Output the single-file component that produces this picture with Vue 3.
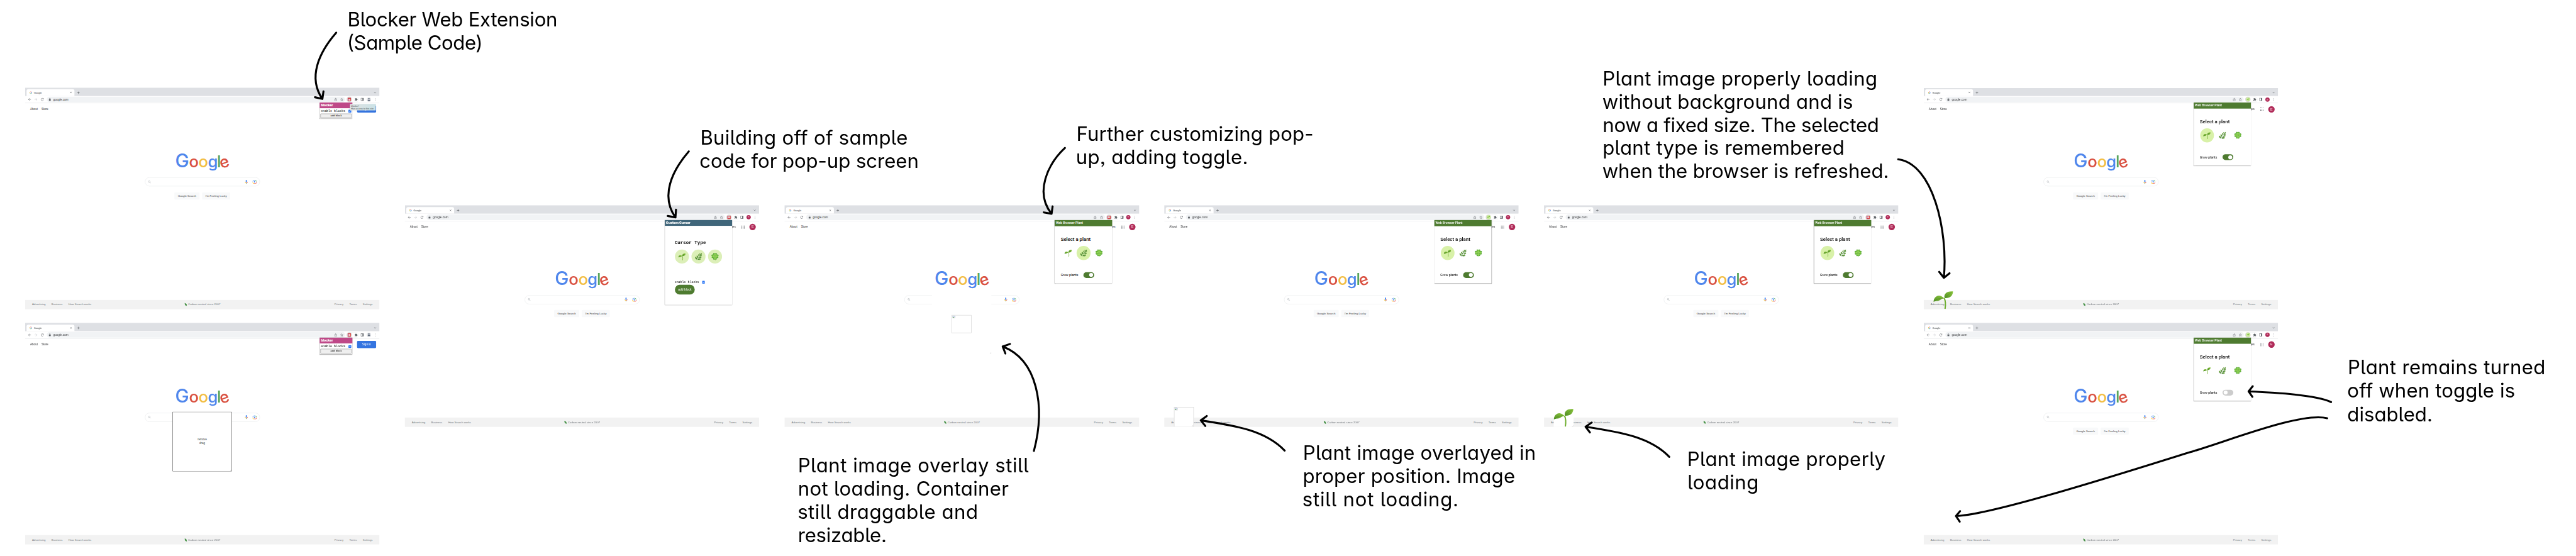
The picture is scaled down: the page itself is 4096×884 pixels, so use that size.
<script setup>
const windows = [
  { id: 'w1', x: 70, y: 243.5, ext: 'b', popup: 'blocker', guest: true, tip: true, buttons: true },
  { id: 'w2', x: 70, y: 898, ext: 'b', popup: 'blocker', guest: true, overlay: 'block' },
  { id: 'w3', x: 1126, y: 571, ext: 'b', popup: 'cursor', buttons: true },
  { id: 'w4', x: 2182.3, y: 571, ext: 'b', popup: 'plant', selected: 'herb', on: true, overlay: 'center' },
  { id: 'w5', x: 3238, y: 571, ext: 'plant', popup: 'plant', selected: 'sprout', on: true, buttons: true, overlay: 'corner' },
  { id: 'w6', x: 4294, y: 571, ext: 'b', popup: 'plant', selected: 'sprout', on: true, buttons: true, overlay: 'corner-plant' },
  { id: 'w7', x: 5350, y: 243.5, ext: 'plant', popup: 'plant', selected: 'sprout', on: true, buttons: true, overlay: 'plant' },
  { id: 'w8', x: 5350, y: 898, ext: 'plant', popup: 'plant', selected: '', on: false, buttons: true },
]
const plants = ['sprout', 'herb', 'clover']

// [text, left, right, baseline]
const notes = [
  ['Blocker Web Extension', 970.5, 1547.5, 73],
  ['(Sample Code)', 969, 1339.6, 138],
  ['Building off of sample', 1951.4, 2521.6, 403],
  ['code for pop-up screen', 1949.5, 2552, 467.5],
  ['Further customizing pop-', 2997.5, 3650, 392],
  ['up, adding toggle.', 2996, 3468, 456.5],
  ['Plant image overlay still', 2223, 2858, 1314],
  ['not loading. Container', 2223, 2802.4, 1378.5],
  ['still draggable and', 2222, 2717, 1443],
  ['resizable.', 2223, 2463, 1508],
  ['Plant image overlayed in', 3627.6, 4268.6, 1278],
  ['proper position. Image', 3627, 4210.6, 1343],
  ['still not loading.', 3626, 4053, 1408],
  ['Plant image properly', 4696, 5240.8, 1296],
  ['loading', 4697, 4888, 1360.6],
  ['Plant image properly loading', 4461, 5218, 237.3],
  ['without background and is', 4460, 5150.6, 302],
  ['now a fixed size. The selected', 4461, 5223, 366.6],
  ['plant type is remembered', 4461, 5126.4, 431],
  ['when the browser is refreshed.', 4460, 5250, 495.7],
  ['Plant remains turned', 6533, 7076, 1041],
  ['off when toggle is', 6532, 6991.6, 1106],
  ['disabled.', 6532, 6762, 1171],
]

const arrows = [
  'M935 91C888 145 855 215 896.6 275M876 270.5L896.6 275L899.6 254',
  'M1915.5 421C1869 475 1836 545 1878.5 604.5M1857 600.5L1878.5 604.5L1880 583',
  'M2961.7 411.4C2915 455 2876 535 2924.5 594.4M2903 590.6L2924.5 594.4L2927.3 574',
  'M2875.4 1254C2908 1130 2885 1000 2788.5 963.6M2808.7 956.5L2788.5 963.6L2796 983',
  'M3572.6 1253C3520 1198 3440 1184 3339.5 1169M3356 1157L3339.5 1169L3352 1184.5',
  'M4642.4 1270.5C4590 1216 4510 1202 4409.5 1186.8M4426.7 1175L4409.5 1186.8L4421.6 1202.5',
  'M5279 443C5375 455 5418 640 5406 772.5M5393 756L5406 772.5L5421.7 760',
  'M6482.8 1118C6440 1098 6330 1092 6253.5 1088.4M6265 1074L6253.5 1088.4L6264 1103.5',
  'M6472 1163C6400 1145 6200 1225 6102 1254S5550 1432 5439.5 1435M5451 1421.5L5439.5 1435L5450 1450.5',
]
</script>

<template>
  <div class="viewport">
    <svg class="defs" aria-hidden="true">
      <defs>
        <linearGradient id="leafA" x1="0" y1="1" x2="1" y2="0">
          <stop offset="0" stop-color="#4f8d24" /><stop offset="1" stop-color="#8fc93f" />
        </linearGradient>
        <linearGradient id="leafB" x1="0" y1="0" x2="0" y2="1">
          <stop offset="0" stop-color="#7fb04c" /><stop offset="1" stop-color="#3f7d31" />
        </linearGradient>
        <radialGradient id="leafC">
          <stop offset="0" stop-color="#a4dd5a" /><stop offset="1" stop-color="#4da52c" />
        </radialGradient>
        <symbol id="sprout" viewBox="0 0 55 55">
          <path d="M30 24C34 32 34 43 32.3 54" fill="none" stroke="#6fae2f" stroke-width="3.6" />
          <path d="M0 35C1 22 11 14 21 18.500C26 20.500 28 23 31.500 26C25 24 22 28 16 30.500C9 33 4 31 0 35Z" fill="url(#leafA)" />
          <path d="M31 24C28 13 36 4 54.500 5.300C54 18 45 25 31 24Z" fill="url(#leafA)" />
          <path d="M2 33C10 26 18 24 27 24M33 22C39 16 45 11 52 7" stroke="#4a8522" stroke-width=".8" fill="none" />
        </symbol>
        <symbol id="herb" viewBox="0 0 55 55">
          <path d="M17 54C17 44 24 38 30 31S42 16 45 7" fill="none" stroke="#6fa046" stroke-width="2" />
          <g fill="url(#leafB)">
            <ellipse cx="10" cy="39" rx="5.500" ry="11" transform="rotate(-38 10 39)" />
            <ellipse cx="20" cy="28" rx="5" ry="9.500" transform="rotate(-34 20 28)" />
            <ellipse cx="30" cy="18" rx="4.300" ry="8" transform="rotate(-28 30 18)" />
            <ellipse cx="38" cy="10" rx="3.300" ry="7" transform="rotate(-14 38 10)" />
            <ellipse cx="48" cy="9" rx="3.300" ry="7.500" transform="rotate(24 48 9)" />
            <ellipse cx="46" cy="20" rx="4" ry="8" transform="rotate(62 46 20)" />
            <ellipse cx="42" cy="32" rx="4.800" ry="9.500" transform="rotate(72 42 32)" />
            <ellipse cx="34" cy="46" rx="6" ry="12" transform="rotate(84 34 46)" />
          </g>
        </symbol>
        <symbol id="clover" viewBox="0 0 55 55">
          <path d="M27 27C27 38 28 46 30 55" fill="none" stroke="#6eb33a" stroke-width="3" />
          <g fill="url(#leafC)">
            <path d="M27 26C20 22 14 14 14 8C15 1 24 -1 27.500 6C31 -1 40 1 41 8C41 14 34 22 27 26Z" />
            <path d="M28 26C32 18 40 12 46 12C54 13 56 22 49 26.500C55 31 52 39 45 39C38 39 31 32 28 26Z" />
            <path d="M27 26C23 18 15 12 9 12C1 13 -1 22 6 26.500C0 31 3 39 10 39C17 39 24 32 27 26Z" />
            <path d="M27 27C20 31 13 38 14 45C16 52 25 53 27.500 46C30 52 39 51 41 45C41 38 35 31 27 27Z" />
          </g>
          <path d="M27 26L22 12M28 26L33 12M27 26L12 21M28 26L43 21M27 26L20 41M28 26L35 41" stroke="#c5ea8c" stroke-width="1.200" />
        </symbol>
        <symbol id="gmark" viewBox="0 0 48 48">
          <g fill="none" stroke-width="8.500">
            <path d="M38 13A18 18 0 0 0 8.400 15" stroke="#ea4335" />
            <path d="M8.400 15A18 18 0 0 0 8.400 33" stroke="#fbbc05" />
            <path d="M8.400 33A18 18 0 0 0 35 38" stroke="#34a853" />
            <path d="M35 38A18 18 0 0 0 42 24H24" stroke="#4285f4" />
          </g>
        </symbol>
        <symbol id="puzzle" viewBox="0 0 24 24">
          <path fill="#5f6368" d="M20.500 11H19V7a2 2 0 0 0-2-2h-4V3.500a2.500 2.500 0 0 0-5 0V5H4a2 2 0 0 0-2 2v3.800h1.500a2.700 2.700 0 0 1 0 5.400H2V20a2 2 0 0 0 2 2h3.800v-1.500a2.700 2.700 0 0 1 5.400 0V22H17a2 2 0 0 0 2-2v-4h1.500a2.500 2.500 0 0 0 0-5z" />
        </symbol>
        <symbol id="broken" viewBox="0 0 16 16">
          <path d="M1 1H11L15 5V7L9 13H1Z" fill="#cfdcec" stroke="#a9b1b8" />
          <path d="M2 11Q5 5 9 10L7 12H2Z" fill="#6aa84f" />
          <path d="M15 8V15H8Z" fill="#d5d5d5" />
        </symbol>
      </defs>
    </svg>

    <div class="board">
      <section v-for="w in windows" :key="w.id" class="window" :style="{ left: w.x + 'px', top: w.y + 'px' }">
        <header class="tabs">
          <div class="tab">
            <svg class="g"><use href="#gmark" /></svg>
            <span>Google</span>
            <svg class="x" viewBox="0 0 6 6"><path d="M1 1L5 5M5 1L1 5" /></svg>
          </div>
          <svg class="plus" viewBox="0 0 8 8"><path d="M4 .5V7.500M.5 4H7.500" /></svg>
          <svg class="chev" viewBox="0 0 8 6"><path d="M1.500 1.500L4 4L6.500 1.500" /></svg>
        </header>

        <div class="toolbar">
          <svg class="nav" viewBox="0 0 9 9"><path d="M8.200 4.500H1.200M4.500 1L1 4.500L4.500 8" /></svg>
          <svg class="nav pale" viewBox="0 0 9 9"><path d="M.8 4.500H7.800M4.500 1L8 4.500L4.500 8" /></svg>
          <svg class="nav" viewBox="0 0 9 9"><path d="M7.600 6A3.400 3.400 0 1 1 6.900 2.100L7.800 3.200M8 .8V3.400H5.400" /></svg>
          <div class="address">
            <svg class="lock" viewBox="0 0 8 10"><rect x="1" y="4" width="6" height="5.500" rx=".8" fill="#5f6368" /><path d="M2.300 4.500V2.700a1.700 1.700 0 0 1 3.400 0V4.500" fill="none" stroke="#5f6368" /></svg>
            <span>google.com</span>
            <svg class="act share" viewBox="0 0 9 10"><path d="M3 3.500H1.500V9H7.500V3.500H6M4.500 6.500V1M2.800 2.600L4.500 1L6.200 2.600" /></svg>
            <svg class="act" viewBox="0 0 10 10"><path d="M5 1L6.200 3.700L9.100 4L6.900 5.900L7.600 8.800L5 7.300L2.400 8.800L3.100 5.900L.9 4L3.800 3.700Z" /></svg>
          </div>
          <div class="extensions">
            <span class="halo">
              <b v-if="w.ext === 'b'" class="bee">B</b>
              <span v-else class="mini"><svg><use href="#sprout" /></svg></span>
            </span>
            <svg class="puzzle"><use href="#puzzle" /></svg>
          </div>
          <svg class="side" viewBox="0 0 9 9"><rect x=".8" y=".8" width="7" height="7" fill="none" stroke="#5f6368" stroke-width="1.200" /><rect x="5" y=".8" width="3" height="7" fill="#5f6368" /></svg>
          <span v-if="w.guest" class="who guest"><svg viewBox="0 0 12 12"><circle cx="6" cy="4" r="2" /><path d="M2.300 9.300C2.300 6.300 9.700 6.300 9.700 9.300Z" /></svg></span>
          <span v-else class="who">E</span>
          <svg class="dots" viewBox="0 0 3 9"><circle cx="1.500" cy="1.500" r=".8" /><circle cx="1.500" cy="4.500" r=".8" /><circle cx="1.500" cy="7.500" r=".8" /></svg>
        </div>

        <nav class="links">
          <span>About</span><span>Store</span>
          <div class="right">
            <span v-if="w.guest" class="signin">Sign in</span>
            <template v-else>
              <span class="images">Images</span>
              <svg class="apps" viewBox="0 0 9 9"><g fill="#5f6368"><template v-for="r in 3" :key="r"><rect v-for="c in 3" :key="c" :x="c * 3.5 - 3.4" :y="r * 3.5 - 3.4" width="1.900" height="1.900" rx=".5" /></template></g></svg>
              <span class="me">E</span>
            </template>
          </div>
        </nav>

        <main class="page">
          <div class="logo"><span class="bl cap">G</span><span class="re">o</span><span class="ye">o</span><span class="bl">g</span><span class="gr ell">l</span><span class="re tilt">e</span></div>
          <div class="search">
            <svg class="mag" viewBox="0 0 8 8"><circle cx="3" cy="3" r="2.200" /><path d="M4.700 4.700L7.400 7.400" /></svg>
            <svg class="mic" viewBox="0 0 10 12"><rect x="3.400" y=".3" width="3.200" height="6.800" rx="1.600" fill="#4285f4" /><path d="M1.700 5.500A3.300 3.300 0 0 0 5 9" stroke="#fbbc05" /><path d="M5 9A3.300 3.300 0 0 0 8.300 5.500" stroke="#ea4335" /><path d="M5 8.700V11.200" stroke="#34a853" /></svg>
            <svg class="lens" viewBox="0 0 12 11"><path d="M1 5V4A2 2 0 0 1 3 2.200H3.600L4.400 1H7.600" stroke="#4285f4" /><path d="M7.600 1L8.400 2.200A2.300 2.300 0 0 1 11 4.500V5" stroke="#34a853" /><path d="M1 6V8A2 2 0 0 0 3 10H5" stroke="#fbbc05" /><path d="M5 10H9A2 2 0 0 0 11 8V6" stroke="#ea4335" /><circle cx="6" cy="5.800" r="1.900" fill="#4285f4" /></svg>
          </div>
          <div v-if="w.buttons" class="buttons"><span>Google Search</span><span>I'm Feeling Lucky</span></div>
        </main>

        <footer class="foot">
          <span>Advertising</span><span>Business</span><span>How Search works</span>
          <div class="carbon"><svg viewBox="0 0 8 10"><path d="M.5.500C4 1 8 4 7.500 9.500C4 9 0 7 .5.500Z" fill="#3c8d40" /><path d="M.5.500C3 3 5 6 7.500 9.500" stroke="#9bd18b" stroke-width=".7" /></svg>Carbon neutral since 2007</div>
          <div class="legal"><span>Privacy</span><span>Terms</span><span>Settings</span></div>
        </footer>

        <div v-if="w.overlay === 'block'" class="block"><span>remove</span><span>drag</span>
          <svg class="grip" viewBox="0 0 6 6"><path d="M1 6L6 1M4 6L6 4" /></svg>
        </div>
        <div v-if="w.overlay === 'center'" class="blank">
          <div class="missing"><svg><use href="#broken" /></svg></div>
          <svg class="grip" viewBox="0 0 6 6"><path d="M1 6L6 1M4 6L6 4" /></svg>
        </div>
        <div v-if="w.overlay === 'corner'" class="corner missing"><svg><use href="#broken" /></svg>
          <svg class="grip" viewBox="0 0 6 6"><path d="M1 6L6 1M4 6L6 4" /></svg>
        </div>
        <div v-if="w.overlay === 'corner-plant'" class="corner">
          <svg class="fill"><use href="#sprout" /></svg>
          <svg class="grip" viewBox="0 0 6 6"><path d="M1 6L6 1M4 6L6 4" /></svg>
        </div>
        <div v-if="w.overlay === 'plant'" class="corner clear"><svg class="fill"><use href="#sprout" /></svg></div>

        <aside v-if="w.popup === 'blocker'" class="popup blocker">
          <h4>blocker</h4>
          <div class="row"><span>enable blocks</span><i class="check"><svg viewBox="0 0 8 8"><path d="M1.800 4.200L3.400 5.800L6.300 2.300" /></svg></i></div>
          <div class="add">add block</div>
        </aside>
        <aside v-if="w.popup === 'cursor'" class="popup cursor">
          <h4>Custom Cursor</h4>
          <h3>Cursor Type</h3>
          <div class="choices"><span v-for="p in plants" :key="p" class="pick on"><svg><use :href="'#' + p" /></svg></span></div>
          <div class="row"><span>enable blocks</span><i class="check"><svg viewBox="0 0 8 8"><path d="M1.800 4.200L3.400 5.800L6.300 2.300" /></svg></i></div>
          <div class="add">add block</div>
        </aside>
        <aside v-if="w.popup === 'plant'" class="popup plant">
          <h4>Web Browser Plant</h4>
          <h3>Select a plant</h3>
          <div class="choices"><span v-for="p in plants" :key="p" class="pick" :class="{ on: p === w.selected }"><svg><use :href="'#' + p" /></svg></span></div>
          <div class="grow"><span>Grow plants</span><i class="toggle" :class="{ off: !w.on }"></i></div>
        </aside>
        <div v-if="w.tip" class="tip"><span>blocker!</span><span>Has access to this site</span></div>
      </section>

      <svg class="notes" viewBox="0 0 7164 1546">
        <path v-for="a in arrows" :key="a" :d="a" />
        <text v-for="n in notes" :key="n[0] + n[1]" :x="n[1] - 4" :y="n[3]" :textLength="n[2] - n[1] + 7">{{ n[0] }}</text>
      </svg>
    </div>
  </div>
</template>

<style>
html, body { margin: 0; background: #fff; overflow: hidden; }
</style>

<style scoped>
* { box-sizing: border-box; }
.viewport { width: 4096px; height: 884px; overflow: hidden; background: #fff; }
.defs { position: absolute; width: 0; height: 0; }
.board { position: relative; width: 7164px; height: 1546px; transform: scale(.57175); transform-origin: 0 0; font-family: "Liberation Sans", Arial, sans-serif; }
.notes { position: absolute; left: 0; top: 0; width: 7164px; height: 1546px; }
.notes path { fill: none; stroke: #000; stroke-width: 5.500; stroke-linecap: round; stroke-linejoin: round; }
.notes text { font-family: Inter, "Noto Sans", sans-serif; font-size: 54.500px; font-feature-settings: "cv11", "ss03", "cv05"; fill: #000; }

.window { position: absolute; width: 985.300px; height: 616px; display: flex; flex-direction: column; background: #fff; color: #3c4043; white-space: nowrap; }
.window svg { display: block; flex: none; }
.tabs { height: 23px; background: #dee0e4; display: flex; align-items: flex-end; padding-left: 3.500px; flex: none; position: relative; }
.tab { width: 133px; height: 18.500px; background: #fff; border-radius: 5px 5px 0 0; display: flex; align-items: center; padding: 0 6.500px 0 8px; font-size: 6.950px; }
.g { width: 7.500px; height: 7.500px; margin-right: 5px; }
.x { width: 6px; height: 6px; margin-left: auto; stroke: #45494d; stroke-width: .9; }
.plus { width: 8px; height: 8px; margin: 0 0 5px 7.500px; stroke: #45494d; stroke-width: 1; }
.chev { width: 8px; height: 6px; margin: 0 8px 6px auto; fill: none; stroke: #45494d; stroke-width: 1; }
.toolbar { height: 20.500px; flex: none; display: flex; align-items: center; padding: .5px 10.300px 0 7.500px; border-bottom: 1px solid #e4e6e8; }
.nav { width: 9px; height: 9px; margin-right: 8.800px; fill: none; stroke: #5f6368; stroke-width: 1; }
.nav.pale { stroke: #bfc2c5; }
.address { width: 830.600px; height: 15.500px; border-radius: 8px; background: #f1f3f5; display: flex; align-items: center; padding: 0 5px 0 5.500px; margin-left: -1px; font-size: 8.200px; color: #303134; }
.lock { width: 7px; height: 8.500px; margin-right: 5.500px; }
.act { width: 9px; height: 9px; fill: none; stroke: #5f6368; stroke-width: .9; }
.act.share { margin: 0 8.500px 0 auto; }
.extensions { width: 34px; height: 15px; margin-left: 3.500px; border: 1px solid #eceef0; border-radius: 8px; display: flex; align-items: center; }
.halo { width: 15px; height: 15px; margin-left: -.5px; border-radius: 50%; background: #dcd8d8; display: flex; align-items: center; justify-content: center; flex: none; }
.bee { width: 9px; height: 9px; background: #cf3e47; color: #fff; font-size: 7.500px; line-height: 9px; text-align: center; }
.mini { width: 11.500px; height: 11.500px; border-radius: 50%; background: #cdeea0; display: flex; align-items: center; justify-content: center; }
.mini svg { width: 8px; height: 8px; }
.puzzle { width: 9px; height: 9px; margin-left: 6.800px; }
.side { width: 9px; height: 9px; margin-left: 5.500px; }
.who { width: 12px; height: 12px; margin-left: 7.500px; border-radius: 50%; background: #b02a58; color: #e9bccb; font-size: 6.500px; line-height: 12px; text-align: center; flex: none; }
.who.guest { background: #dfe1e5; fill: #4e5a6b; }
.dots { width: 3px; height: 9px; margin-left: auto; fill: #5f6368; }

.links { height: 32px; flex: none; display: flex; align-items: center; gap: 10.500px; padding: 1px 9.500px 0 14px; font-size: 8px; color: #303134; }
.right { margin-left: auto; display: flex; align-items: center; }
.signin { width: 53px; height: 19.500px; border-radius: 2.500px; background: #3474e0; color: #fff; line-height: 19.500px; text-align: center; }
.images { margin-right: 16px; }
.apps { width: 9px; height: 9px; margin-right: 13px; }
.me { width: 18px; height: 18px; border-radius: 50%; background: #b02a58; color: #f0c9d6; text-align: center; line-height: 18px; font-size: 10px; }

.page { flex: 1; display: flex; flex-direction: column; align-items: center; }
.logo { height: 66px; flex: none; display: flex; align-items: baseline; margin: 95.600px 2px 12.900px 0; font-family: Inter, sans-serif; font-weight: 550; font-size: 45px; line-height: 66px; }
.logo span { display: flex; justify-content: center; width: 26.400px; }
.logo .cap { width: 39.300px; font-size: 52px; font-weight: 500; }
.logo .ell { width: 8.200px; }
.logo .tilt { width: 23.200px; transform: rotate(-20deg); transform-origin: 50% 37px; }
.bl { color: #4f86ec; } .re { color: #d95040; } .ye { color: #f2bd42; } .gr { color: #58a55c; }
.search { width: 320px; height: 25px; flex: none; border: 1px solid #e6e8ea; border-radius: 13px; display: flex; align-items: center; padding: 0 8px; }
.mag { width: 8px; height: 8px; fill: none; stroke: #9aa0a6; stroke-width: .9; }
.mic { width: 10px; height: 12px; margin: 0 12px 0 auto; fill: none; stroke-width: 1.300; }
.lens { width: 12px; height: 11px; fill: none; stroke-width: 1.400; }
.buttons { display: flex; gap: 7px; margin-top: 16.500px; font-size: 7.700px; line-height: 20px; text-align: center; }
.buttons span { width: 70px; background: #f8f9fa; border-radius: 2px; }
.buttons span + span { width: 78px; }
.foot { height: 26px; flex: none; background: #f2f2f2; display: flex; align-items: center; gap: 16.300px; padding: 0 19px; font-size: 7.650px; color: #70757a; position: relative; }
.carbon { position: absolute; left: 0; right: 0; display: flex; justify-content: center; align-items: center; gap: 3px; }
.carbon svg { width: 7.500px; height: 9px; }
.legal { margin-left: auto; display: flex; gap: 16.300px; }

.block { position: absolute; left: 409.700px; top: 247px; width: 165.500px; height: 165.700px; background: #fff; border: 1px solid #4c4c4c; display: flex; flex-direction: column; align-items: center; justify-content: center; font-size: 7.800px; line-height: 8.700px; }
.blank { position: absolute; left: 409.700px; top: 247px; width: 165.500px; height: 165.700px; background: #fff; display: flex; align-items: center; justify-content: center; }
.missing { width: 55px; height: 50px; border: 1px solid #cdcdcd; background: #fff; }
.missing > svg:first-child { width: 10px; height: 9px; }
.corner { position: absolute; left: 27px; top: 561px; width: 55px; height: 55px; background: #fff; }
.corner.missing { border-bottom-color: #eee; }
.corner.clear { background: none; }
.fill { width: 55px; height: 55px; }
.grip { position: absolute; right: 0; bottom: 0; width: 5px; height: 5px; stroke: #9b9b9b; stroke-width: .8; }

.popup { position: absolute; top: 41px; right: 75px; background: #fff; box-shadow: 0 1px 2px rgba(0, 0, 0, .35), 0 0 1px rgba(0, 0, 0, .3); color: #000; }
.popup h4, .popup h3 { margin: 0; }
.popup h4 { color: #fff; padding-left: 3.200px; font-family: Inter, sans-serif; }
.row { display: flex; align-items: center; font-family: "Liberation Mono", monospace; font-size: 8.700px; }
.check { width: 7.500px; height: 7.500px; border-radius: 1px; background: #2b76f5; }
.check svg { width: 7.500px; height: 7.500px; fill: none; stroke: #fff; stroke-width: 1.200; }
.blocker { width: 91px; height: 45.500px; }
.blocker h4 { height: 16px; line-height: 16px; background: #bf4888; font-size: 8.800px; font-weight: 900; }
.blocker .row { height: 15px; padding: 1.500px 3.500px 0 3px; justify-content: space-between; }
.blocker .add { margin: 0 2.200px; height: 12.500px; background: #efefef; border: 1px solid #8a8a8a; border-radius: 1px; font-size: 7.400px; line-height: 10.500px; text-align: center; }
.cursor { width: 187.500px; height: 236px; }
.cursor h4 { height: 16px; line-height: 16px; background: #40667a; font-size: 8.950px; font-weight: 900; }
.cursor h3 { margin: 38.500px 0 0 27.300px; font: bold 13.200px/18px "Liberation Mono", monospace; }
.cursor .choices { display: flex; gap: 7.200px; margin: 9.500px 0 0 28.300px; }
.cursor .row { margin: 47px 0 0 27.300px; height: 10px; gap: 9px; }
.cursor .add { margin: 2.500px 0 0 28.300px; width: 54.700px; height: 26.700px; border-radius: 13px; background: #4e7b30; color: #fff; font-size: 8.700px; line-height: 26.700px; text-align: center; }
.pick { width: 38.800px; height: 38.800px; border-radius: 50%; display: flex; align-items: center; justify-content: center; }
.pick svg { width: 21px; height: 21px; }
.cursor .pick.on { background: #dcefb8; }
.plant { width: 159.300px; height: 176px; font-family: Roboto, sans-serif; }
.plant h4 { height: 17px; background: #4e7b30; font: 500 8.900px/17.500px Roboto, sans-serif; }
.plant h3 { margin: 27.200px 0 0 16.700px; font-weight: 500; font-size: 13.700px; line-height: 18px; }
.plant .choices { display: flex; gap: 4.200px; margin: 10.300px 0 0 17.500px; }
.plant .pick.on { background: #d8f1a8; }
.grow { display: flex; align-items: center; margin: 33.300px 0 0 16.700px; height: 16px; font-size: 9.100px; }
.grow span { width: 63.300px; }
.toggle { width: 30px; height: 16px; border-radius: 8px; background: #4e7b30; display: flex; align-items: center; justify-content: flex-end; padding: 0 3px; }
.toggle::after { content: ""; width: 11px; height: 11px; border-radius: 50%; background: #fff; }
.toggle.off { background: #ccc; justify-content: flex-start; }
.tip { position: absolute; left: 902.700px; top: 45.500px; width: 72.500px; height: 18.300px; background: linear-gradient(90deg, #dfe2e2, #cbe2e6); box-shadow: 0 1px 2px rgba(0, 0, 0, .4); padding: 1.600px 3.500px; display: flex; flex-direction: column; font-size: 6.300px; line-height: 7.600px; color: #4d5254; }
</style>
